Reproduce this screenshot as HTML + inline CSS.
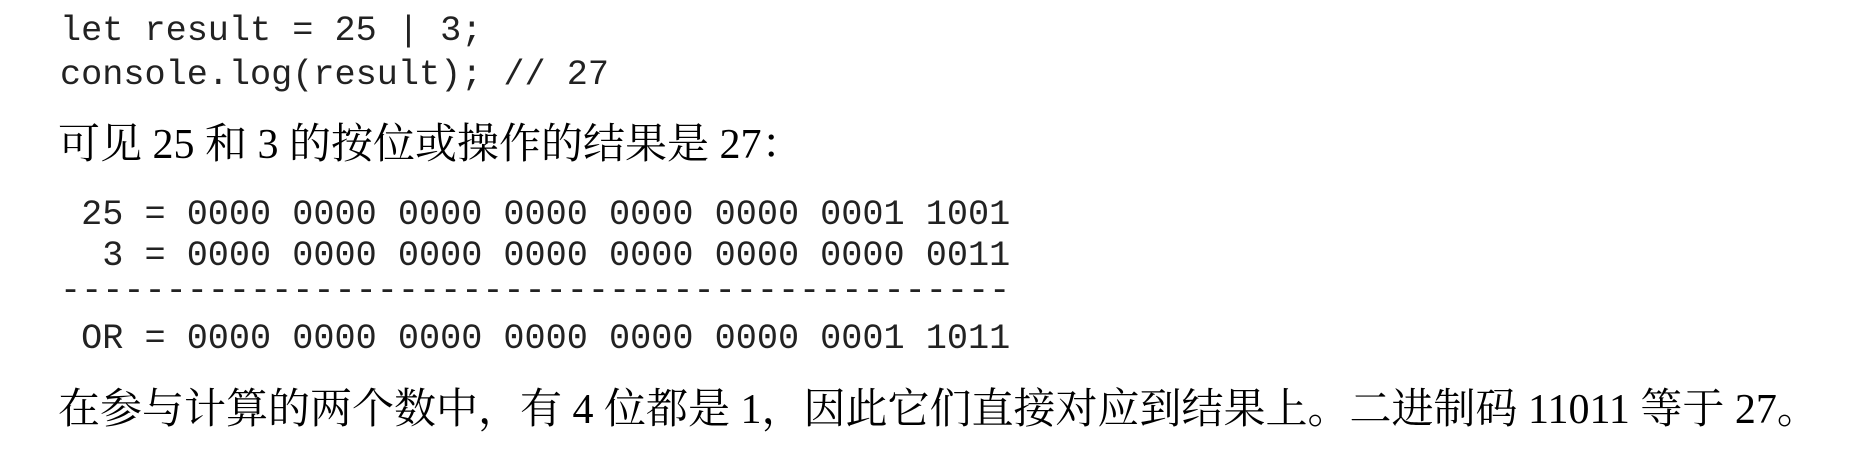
<!DOCTYPE html>
<html><head><meta charset="utf-8"><style>
html,body{margin:0;padding:0;background:#fff;width:1876px;height:450px;overflow:hidden;position:relative;color:#111}
.l{position:absolute;white-space:pre;line-height:1}
.m{font-family:"Liberation Mono",monospace;font-size:35.2px;color:#222}
.s{font-family:"Liberation Serif","Noto Serif CJK SC",serif;font-size:42px;color:#000}
</style></head><body>
<div class="l m" style="left:60px;top:14px">let result = 25 | 3;</div>
<div class="l m" style="left:60px;top:58px">console.log(result); // 27</div>
<div class="l s" style="left:58px;top:124px">可见 25 和 3 的按位或操作的结果是 27：</div>
<div class="l m" style="left:60px;top:198px"> 25 = 0000 0000 0000 0000 0000 0000 0001 1001</div>
<div class="l m" style="left:60px;top:239px">  3 = 0000 0000 0000 0000 0000 0000 0000 0011</div>
<div class="l m" style="left:60px;top:274px">---------------------------------------------</div>
<div class="l m" style="left:60px;top:322px"> OR = 0000 0000 0000 0000 0000 0000 0001 1011</div>
<div class="l s" style="left:58px;top:389px">在参与计算的两个数中，有 4 位都是 1，因此它们直接对应到结果上。二进制码 11011 等于 27。</div>
</body></html>
